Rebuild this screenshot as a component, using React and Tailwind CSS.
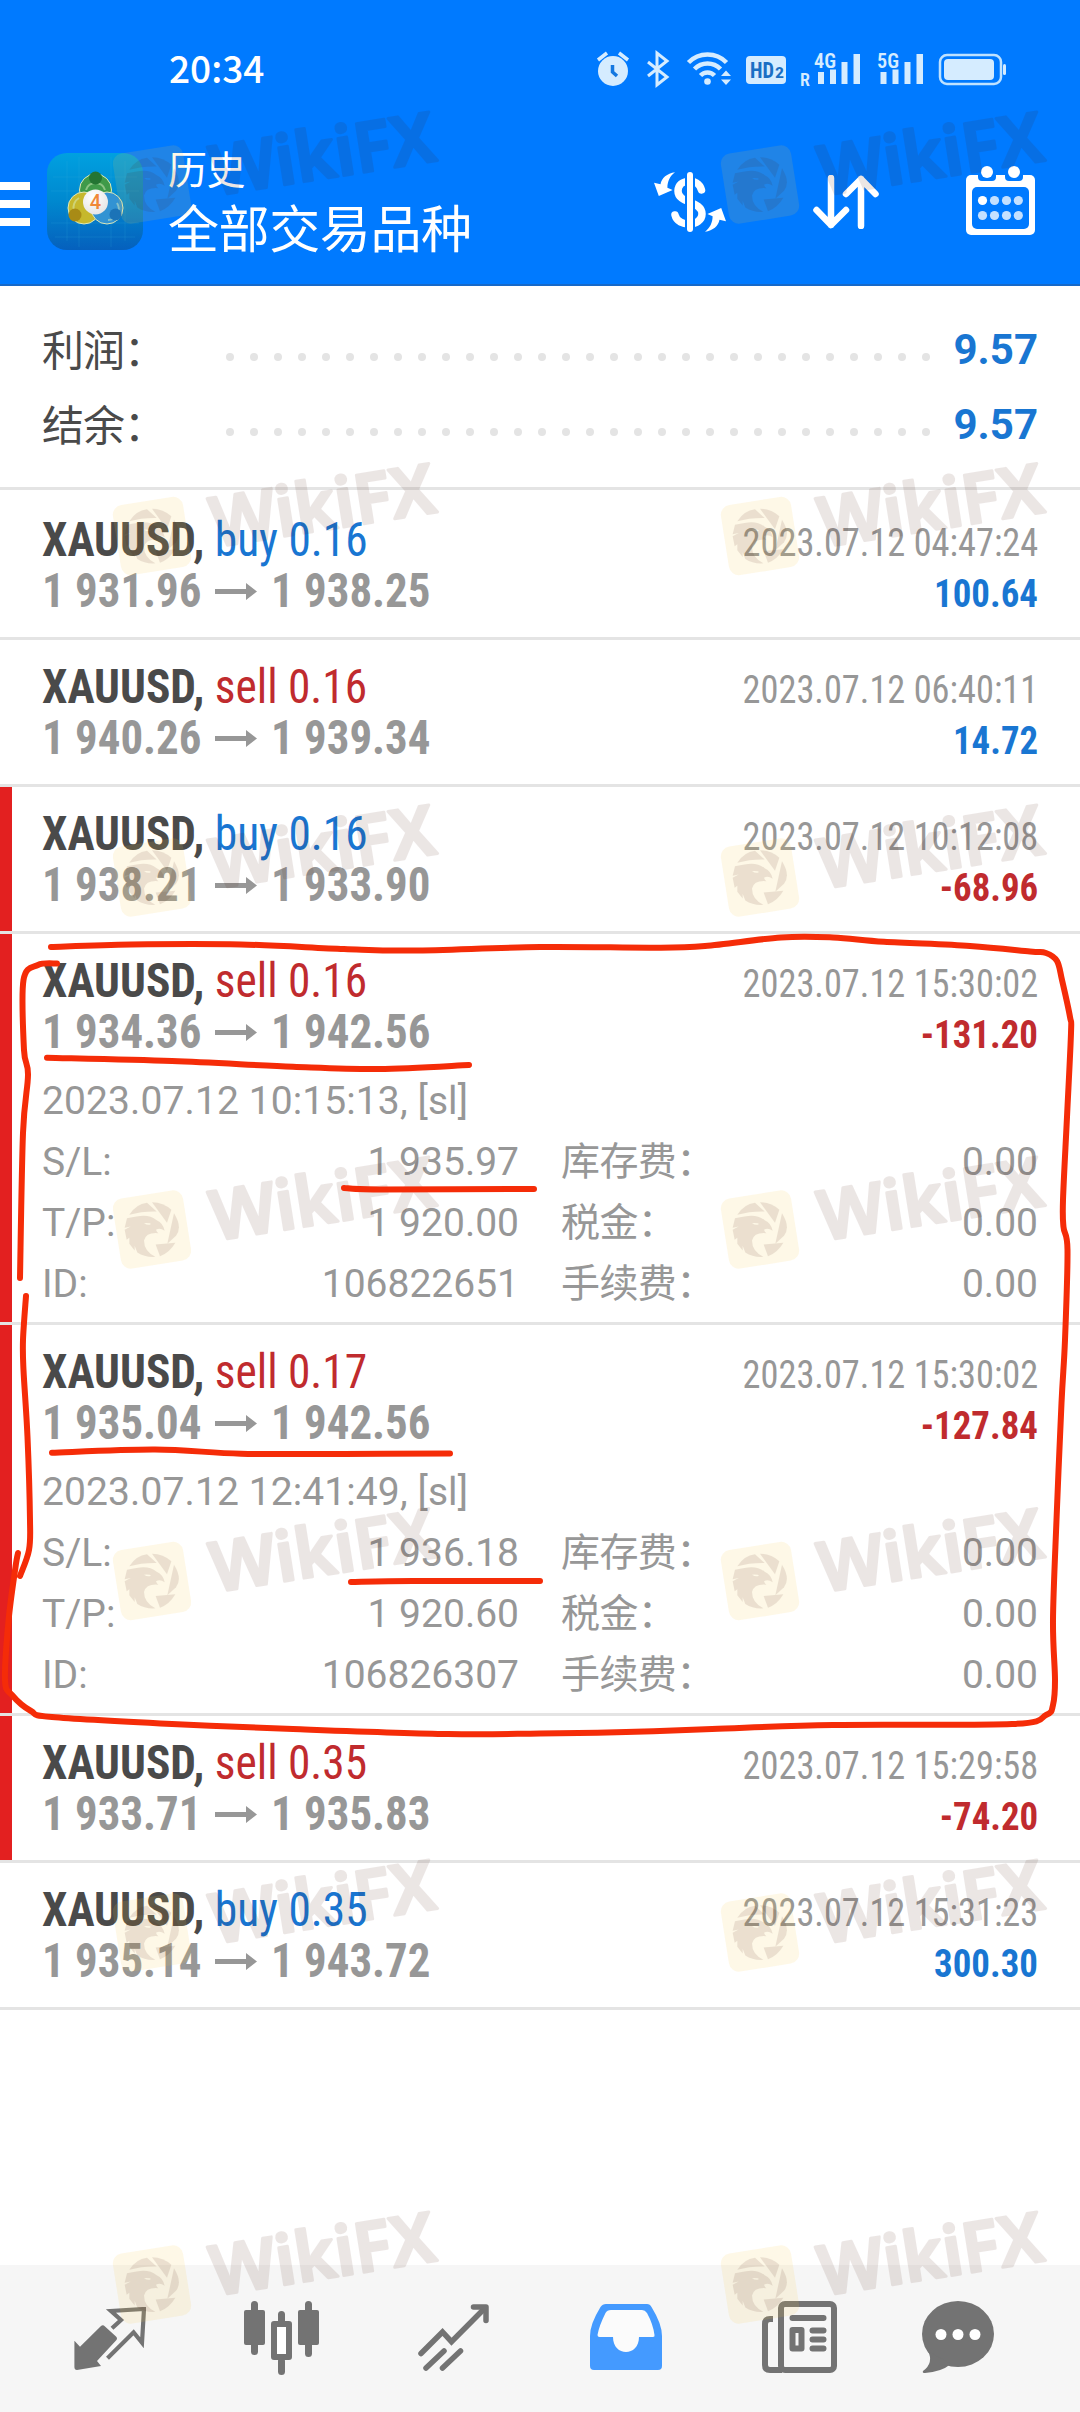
import React from 'react';

const trades = [
  { side: 'buy', volume: '0.16', open: '1 931.96', close: '1 938.25', time: '2023.07.12 04:47:24', profit: '100.64' },
  { side: 'sell', volume: '0.16', open: '1 940.26', close: '1 939.34', time: '2023.07.12 06:40:11', profit: '14.72' },
  { side: 'buy', volume: '0.16', open: '1 938.21', close: '1 933.90', time: '2023.07.12 10:12:08', profit: '-68.96' },
  {
    side: 'sell', volume: '0.16', open: '1 934.36', close: '1 942.56', time: '2023.07.12 15:30:02', profit: '-131.20',
    details: { opened: '2023.07.12 10:15:13, [sl]', sl: '1 935.97', tp: '1 920.00', id: '106822651' },
  },
  {
    side: 'sell', volume: '0.17', open: '1 935.04', close: '1 942.56', time: '2023.07.12 15:30:02', profit: '-127.84',
    details: { opened: '2023.07.12 12:41:49, [sl]', sl: '1 936.18', tp: '1 920.60', id: '106826307' },
  },
  { side: 'sell', volume: '0.35', open: '1 933.71', close: '1 935.83', time: '2023.07.12 15:29:58', profit: '-74.20' },
  { side: 'buy', volume: '0.35', open: '1 935.14', close: '1 943.72', time: '2023.07.12 15:31:23', profit: '300.30' },
];

const StatusIcons = () => (
  <svg width="420" height="44" viewBox="596 48 420 44" fill="#d5ecff" stroke="none">
    {/* alarm */}
    <circle cx="613" cy="71" r="15" />
    <path d="M598 60l9-7M628 60l-9-7" stroke="#d5ecff" strokeWidth="3.5" />
    <path d="M612.500 65v7l4.500 4" stroke="#1478e0" strokeWidth="3.500" fill="none" />
    {/* bluetooth */}
    <path d="M648 62l19 15-10 8V53l10 8-19 15" fill="none" stroke="#d5ecff" strokeWidth="3" />
    {/* wifi */}
    <g fill="none" stroke="#d5ecff" strokeWidth="4.500">
      <path d="M688.500 62.500a26.500 26.500 0 0 1 38 0" />
      <path d="M694.500 69a18 18 0 0 1 26 0" />
      <path d="M700.500 75.500a9.500 9.500 0 0 1 14 0" />
    </g>
    <circle cx="707.500" cy="81.500" r="3.300" />
    <path d="M721 76l5-5.500 5 5.500zM721 79.500l5 5.500 5-5.500z" />
    {/* hd */}
    <rect x="746" y="56" width="40" height="28" rx="4" />
    <g fill="#1a6fc4" fontFamily="Roboto Condensed, Roboto, sans-serif" fontWeight="700">
      <text x="750" y="78" fontSize="22" textLength="24" lengthAdjust="spacingAndGlyphs">HD</text>
      <text x="775" y="78" fontSize="14" textLength="9" lengthAdjust="spacingAndGlyphs">2</text>
    </g>
    {/* both sims */}
    <g fontFamily="Roboto Condensed, Roboto, sans-serif" fontWeight="600">
      <text x="800" y="86" fontSize="18">R</text>
      <text x="814" y="67.500" fontSize="21" textLength="22" lengthAdjust="spacingAndGlyphs">4G</text>
      <text x="877" y="67.500" fontSize="21" textLength="22" lengthAdjust="spacingAndGlyphs">5G</text>
    </g>
    <path d="M818 72h6v12h-6zM830 69.500h6v14.500h-6zM841.500 62h6v22h-6zM853.500 54h6.500v30h-6.500z" />
    <path d="M880.500 72h6v12h-6zM892.500 69.500h6v14.500h-6zM904.500 62h6v22h-6zM916.500 54h6.500v30h-6.500z" />
    {/* battery */}
    <rect x="940" y="55" width="61" height="29" rx="7" fill="none" stroke="#bfe2ff" strokeWidth="2.500" />
    <rect x="944" y="59" width="50" height="21" rx="4" />
    <rect x="1003" y="64" width="3" height="11" rx="1.500" />
  </svg>
);

const MetaTraderLogo = () => (
  <svg className="ml-[17px] mt-[15px] shrink-0" width="96" height="97" viewBox="0 0 96 97">
    <defs>
      <linearGradient id="tile" x1="0" y1="0" x2="0" y2="1">
        <stop offset="0" stopColor="#00a0e0" />
        <stop offset="0.500" stopColor="#0088cf" />
        <stop offset="1" stopColor="#0560bd" />
      </linearGradient>
      <radialGradient id="four" cx="0.400" cy="0.300" r="0.800">
        <stop offset="0" stopColor="#ffffff" />
        <stop offset="1" stopColor="#e2e2e2" />
      </radialGradient>
    </defs>
    <rect width="96" height="97" rx="20" fill="url(#tile)" />
    <path d="M20 8v80M32 4v90M64 4v90M78 8v80M6 24h84M4 38h88M4 70h88M8 84h80" stroke="#39b5e6" strokeOpacity="0.180" />
    <g stroke="#dfe9b8" strokeWidth="1">
      <circle cx="48.500" cy="37" r="16" fill="#3f9a49" />
      <circle cx="37" cy="55" r="16" fill="#c6b82d" />
      <circle cx="60" cy="55" r="16" fill="#3293d3" />
    </g>
    <path d="M39 37a10 10 0 0 1 19 0M27 58a11 11 0 0 1 5-13M70 50a11 11 0 0 1-9 17" fill="none" stroke="#d8edc0" strokeWidth="2" strokeOpacity="0.500" />
    <circle cx="48.500" cy="25" r="6.500" fill="#247533" />
    <circle cx="28" cy="62" r="6.500" fill="#a88b16" />
    <circle cx="68.500" cy="61.500" r="6" fill="#1b73b7" />
    <circle cx="48.500" cy="49" r="12.500" fill="url(#four)" />
    <text x="48.500" y="56" textAnchor="middle" fontFamily="Roboto, sans-serif" fontWeight="500" fontSize="20" fill="#f08838">4</text>
  </svg>
);

const DollarIcon = () => (
  <svg className="mt-[34px]" width="72" height="60" viewBox="0 0 72 60">
    <path d="M47.500 18C44 5 24 7 24 19c0 13 24 9.500 24 23 0 12.500-24 14-27 1" fill="none" stroke="#fff" strokeWidth="7.500" strokeLinecap="round" />
    <path d="M36 0v60" stroke="#007aff" strokeWidth="10" />
    <path d="M36 3v54" stroke="#fff" strokeWidth="6" strokeLinecap="round" />
    <path d="M21 .3C13 1.500 7.500 6 6.500 12.300L0 10.700 4.800 24 18.600 18l-5.200-2.300C13.400 9.500 16 4 21 .3z" fill="#fff" />
    <path d="M21 .3C13 1.500 7.500 6 6.500 12.300L0 10.700 4.800 24 18.600 18l-5.200-2.300C13.400 9.500 16 4 21 .3z" fill="#fff" transform="rotate(180 36 30)" />
  </svg>
);

const SortIcon = () => (
  <svg className="mt-[37px]" width="66" height="54" viewBox="0 0 66 54" fill="none" stroke="#fff" strokeWidth="6.500" strokeLinecap="round" strokeLinejoin="round">
    <path d="M18 3v47M3.500 35L18 50l15-15" />
    <path d="M48 51V4M33 19L48 4l14.500 15" />
  </svg>
);

const CalendarIcon = () => (
  <svg className="mr-[45px] mt-[28px]" width="69" height="69" viewBox="0 0 69 69">
    <rect y="9" width="69" height="60" rx="5" fill="#fff" />
    <rect x="6" y="21" width="57" height="42" rx="5" fill="#007aff" />
    <path d="M12 5h18v6a4 4 0 0 1-4 4H16a4 4 0 0 1-4-4zM39 5h18v6a4 4 0 0 1-4 4H43a4 4 0 0 1-4-4z" fill="#007aff" />
    <circle cx="21" cy="6" r="6" fill="#fff" />
    <circle cx="48" cy="6" r="6" fill="#fff" />
    {[16.5, 28.5, 40.5, 52.3].map((x, i) => (
      <g key={x}>
        <circle cx={x} cy="34.500" r="4.600" fill={i === 0 ? '#fff' : '#c4e0ff'} />
        <circle cx={x} cy="49.500" r="4.600" fill="#c4e0ff" />
      </g>
    ))}
  </svg>
);

const Header = () => (
  <header className="h-[286px] border-b-2 border-[#1769c8] bg-[#007aff] text-white">
    <div className="flex h-[138px] items-start justify-between pl-[169px] pr-[64px]">
      <span className="mt-[35px] font-['Noto_Sans_CJK_SC',sans-serif] text-[37px] font-medium leading-[64px]">20:34</span>
      <div className="mt-[48px]"><StatusIcons /></div>
    </div>
    <div className="flex items-start">
      <div className="mt-[44px] flex w-[30px] flex-col gap-[10px]">
        <i className="h-2 bg-white" />
        <i className="h-2 bg-white" />
        <i className="h-2 bg-white" />
      </div>
      <MetaTraderLogo />
      <div className="ml-[25px] mt-[9px] flex-1">
        <p className="text-[39px] leading-[48px] tracking-[-0.5px]">历史</p>
        <p className="mt-[6px] text-[51px] leading-[60px] tracking-[-0.4px]">全部交易品种</p>
      </div>
      <div className="flex items-start gap-[87px]">
        <DollarIcon />
        <SortIcon />
        <CalendarIcon />
      </div>
    </div>
  </header>
);

const SummaryRow = ({ label, value }) => (
  <div className="flex h-[75px] items-center text-[42px] leading-[75px]">
    <span className="mt-[3px] w-[184px] tracking-[-1px] text-[#4a4a4a]">{label}</span>
    <span className="mt-[15px] flex w-[704px] justify-between">
      {Array.from({ length: 30 }, (_, i) => <i key={i} className="size-2 rounded-full bg-[#e4e4e4]" />)}
    </span>
    <span className="flex-1 text-right font-bold text-[#1976d2]">{value}</span>
  </div>
);

const DetailRow = ({ left, value, right }) => (
  <div className="flex h-[61px] leading-[61px]">
    <span className="w-[174px]">{left}</span>
    <span className="w-[303px] text-right">{value}</span>
    <span className="ml-[42px] flex-1 tracking-[-0.6px]">{right}</span>
    <span>0.00</span>
  </div>
);

const Trade = ({ trade, first }) => {
  const loss = trade.profit.startsWith('-');
  const { details } = trade;
  return (
    <div className={`flex border-b-[3px] border-[#e4e4e4] ${details ? 'h-[391px]' : first ? 'h-[150px] pt-[3px]' : 'h-[147px]'}`}>
      <div className={`w-3 ${loss ? 'bg-[#e32020]' : ''}`} />
      <div className="flex-1 pl-[30px] pr-[42px] pt-[19px] text-[#979797]">
        <div className="flex h-[56px] items-baseline justify-between font-['Roboto_Condensed','Roboto',sans-serif]">
          <p className="origin-left scale-x-[.945] text-[48px] leading-[56px]">
            <span className="font-bold text-[#4a4a4a]">XAUUSD,</span>{' '}
            <span className={trade.side === 'buy' ? 'text-[#1976d2]' : 'text-[#c02b2e]'}>{trade.side} {trade.volume}</span>
          </p>
          <p className="origin-right scale-x-[.932] text-[39px] leading-none">{trade.time}</p>
        </div>
        <div className="flex h-[46px] items-baseline font-['Roboto_Condensed','Roboto',sans-serif] font-bold">
          <span className="w-[173px] origin-left scale-x-[.935] whitespace-nowrap text-[48px] leading-[46px]">{trade.open}</span>
          <svg width="42" height="31" viewBox="0 0 42 31" fill="#979797"><path d="M0 13h31V7l11 8.500L31 24v-6H0z" /></svg>
          <span className="ml-[14px] origin-left scale-x-[.935] whitespace-nowrap text-[48px] leading-[46px]">{trade.close}</span>
          <span className={`ml-auto origin-right scale-x-[.945] text-[39px] leading-none ${loss ? 'text-[#c02b2e]' : 'text-[#1976d2]'}`}>{trade.profit}</span>
        </div>
        {details && (
          <div className="mt-[16px] text-[39px]">
            <p className="h-[61px] leading-[60px] tracking-[0.1px]">{details.opened}</p>
            <DetailRow left="S/L:" value={details.sl} right="库存费：" />
            <DetailRow left="T/P:" value={details.tp} right="税金：" />
            <DetailRow left="ID:" value={details.id} right="手续费：" />
          </div>
        )}
      </div>
    </div>
  );
};

const TabBar = () => (
  <nav className="flex h-[147px] items-start bg-[#f6f6f6] text-[#737373]">
    <svg className="ml-[74px] mt-[42px]" width="72" height="64" viewBox="0 0 72 64">
      <path d="M.4 33.700L6 39.700 27 19q2-1.500 4 .5L42 29.500q2 2 0 4L23 54l4 5L3 63Q.4 63 .4 60z" fill="currentColor" />
      <path d="M38 21.300L47 13 37 4 70 2 68 35.700 59.600 25.300 33.500 51.300" fill="none" stroke="currentColor" strokeWidth="4.200" />
    </svg>
    <svg className="ml-[98px] mt-[36px]" width="75" height="74" viewBox="0 0 75 74" fill="currentColor" stroke="currentColor" strokeLinecap="round">
      <path d="M10.500 3.500v47M37.500 13.500v10M37.500 60v10.500M64.500 3.500v49" strokeWidth="7" />
      <rect x="0" y="9" width="21" height="35" rx="2" stroke="none" />
      <rect x="54" y="9" width="21" height="35" rx="2" stroke="none" />
      <rect x="30" y="23" width="15" height="33" fill="#fff" strokeWidth="6" strokeLinejoin="round" />
    </svg>
    <svg className="ml-[99px] mt-[39px]" width="71" height="67" viewBox="0 0 71 67" fill="none" stroke="currentColor" strokeWidth="5.500" strokeLinecap="round">
      <path d="M3 49.500L24.500 28l9 9.700L67 4" />
      <path d="M55.500 3H68v13.500" strokeLinejoin="round" />
      <path d="M8 64l18-17M24.500 64l18-17" />
    </svg>
    <svg className="ml-[101px] mt-[39px]" width="72" height="66" viewBox="0 0 72 66">
      <path d="M16 0h41q3 0 4.500 3Q72 20 72 32v30q0 4-4 4H4q-4 0-4-4V32Q0 20 10.500 3 12.500 0 16 0z" fill="#449aff" />
      <path d="M21 6q-4 0-5.500 3Q9 22 7.500 31q0 2 2 2H23c0 20 26 20 26 0h14q2 0 1.500-2Q63 20 57 9q-2-3-5-3z" fill="#fbfbfb" />
    </svg>
    <svg className="ml-[100px] mt-[36px]" width="75" height="72" viewBox="0 0 75 72" fill="none" stroke="currentColor" strokeWidth="6">
      <path d="M11 18H8q-5 0-5 5v41q0 5 5 5h12" />
      <rect x="19" y="3" width="53" height="66" rx="4" />
      <path d="M30.500 17h31M50.500 29.500h11M50.500 38.500h11M50.500 47.500h11" strokeLinecap="round" />
      <rect x="30.500" y="29" width="9" height="18.500" strokeLinejoin="round" />
    </svg>
    <svg className="ml-[85px] mt-[36px]" width="72" height="72" viewBox="0 0 72 72">
      <ellipse cx="36" cy="33" rx="36" ry="33" fill="currentColor" />
      <path d="M6 50q6 12-5 20-1 2 2 2 16-1 26-9z" fill="currentColor" />
      <circle cx="19" cy="33.500" r="5.500" fill="#fff" />
      <circle cx="36" cy="33.500" r="5.500" fill="#fff" />
      <circle cx="53" cy="33.500" r="5.500" fill="#fff" />
    </svg>
  </nav>
);

const Watermark = ({ x, y }) => (
  <g transform={`translate(${x} ${y})`}>
    <rect x="-35.500" y="-35.500" width="71" height="71" rx="10" transform="rotate(-9)" fill="#f5c842" opacity="0.130" />
    <g transform="scale(.3333) translate(-136 -147)" fill="#4a1408" opacity="0.100">
      <path d="M68 103Q88 71 121 67L150 93Q105 92 68 103z" />
      <path d="M136 65Q170 65 194 88L181 127z" />
      <path d="M202 98Q228 140 208 166L182 190z" />
      <path d="M206 187Q188 218 160 227L147 192z" />
      <path fillRule="evenodd" d="M61 113Q78 110 90 108 126 100 150 119 170 128 174 151 160 141 148 148 150 155 155 158 118 155 112 180 112 212 146 229 115 231 92 216L84 196 84 210 68 190 68 172 60 178 54 148 72 138 54 142zM112 128q12 8 20 3 1-4-20-3z" />
    </g>
    <g transform="rotate(-9)" opacity="0.100">
      <text x="60" y="21" fontFamily="Noto Sans, sans-serif" fontWeight="600" fontSize="69" textLength="226" lengthAdjust="spacingAndGlyphs" fill="#4a1408" stroke="#4a1408" strokeWidth="3" strokeLinejoin="round">WikiFX</text>
    </g>
  </g>
);

// Catmull-Rom spline through the recorded pen points
const smooth = (pts) => {
  let d = `M${pts[0][0]} ${pts[0][1]}`;
  for (let i = 0; i < pts.length - 1; i++) {
    const a = pts[i - 1] || pts[i];
    const b = pts[i];
    const c = pts[i + 1];
    const e = pts[i + 2] || c;
    d += `C${b[0] + (c[0] - a[0]) / 6} ${b[1] + (c[1] - a[1]) / 6} ${c[0] - (e[0] - b[0]) / 6} ${c[1] - (e[1] - b[1]) / 6} ${c[0]} ${c[1]}`;
  }
  return d;
};

const strokes = [
  [[51, 947], [131, 944.5], [241, 944.5], [344, 949], [413, 950.5], [540, 947], [653, 947.7], [705, 946], [781, 937.5], [833, 937.5], [884, 941.7], [970, 946], [1030, 951.5], [1046, 953], [1057, 961], [1062, 980], [1070, 1017], [1071, 1033], [1067, 1117], [1063, 1200], [1063.5, 1227], [1067.5, 1250], [1065, 1340], [1061.5, 1403], [1056.5, 1520], [1053, 1620], [1055, 1680], [1053, 1705], [1046, 1715], [1012, 1724], [833, 1725], [712, 1729], [626, 1732], [540, 1733.5], [448, 1734], [293, 1729], [172, 1724], [52, 1717], [31, 1711], [12, 1695], [5, 1680], [8.6, 1620], [15.5, 1567], [18, 1553]],
  [[57, 963.5], [38, 965], [23.5, 980], [24, 1050], [28, 1075], [23, 1133], [20, 1278]],
  [[26, 1296], [23, 1340], [23.5, 1370], [27.5, 1437], [30, 1520], [29, 1550], [20, 1576]],
  [[47, 1057.7], [172, 1061], [293, 1066.7], [379, 1069], [469, 1065]],
  [[344, 1188], [379, 1189.5], [534, 1189]],
  [[52, 1452.7], [155, 1449.5], [241, 1453.7], [344, 1454], [450, 1453.5]],
  [[351, 1582], [413, 1581], [540, 1581]],
];

const Overlay = () => (
  <svg className="pointer-events-none absolute inset-0" width="1080" height="2412" viewBox="0 0 1080 2412">
    {[184.5, 536, 877.5, 1229.5, 1581, 1932.5, 2284.5].map((y) => (
      <g key={y}>
        <Watermark x={152} y={y} />
        <Watermark x={760} y={y} />
      </g>
    ))}
    <g fill="none" stroke="#f52c08" strokeWidth="6" strokeLinecap="round">
      {strokes.map((pts, i) => <path key={i} d={smooth(pts)} />)}
    </g>
  </svg>
);

export default function App() {
  return (
    <div className="relative flex h-[2412px] w-[1080px] flex-col overflow-hidden bg-white font-['Roboto','Noto_Sans_CJK_SC',sans-serif]">
      <Header />
      <section className="h-[204px] border-b-[3px] border-[#e4e4e4] pl-[42px] pr-[42px] pt-[26px]">
        <SummaryRow label="利润：" value="9.57" />
        <SummaryRow label="结余：" value="9.57" />
      </section>
      <main className="flex-1">
        {trades.map((trade, i) => <Trade key={i} trade={trade} first={i === 0} />)}
      </main>
      <TabBar />
      <Overlay />
    </div>
  );
}
